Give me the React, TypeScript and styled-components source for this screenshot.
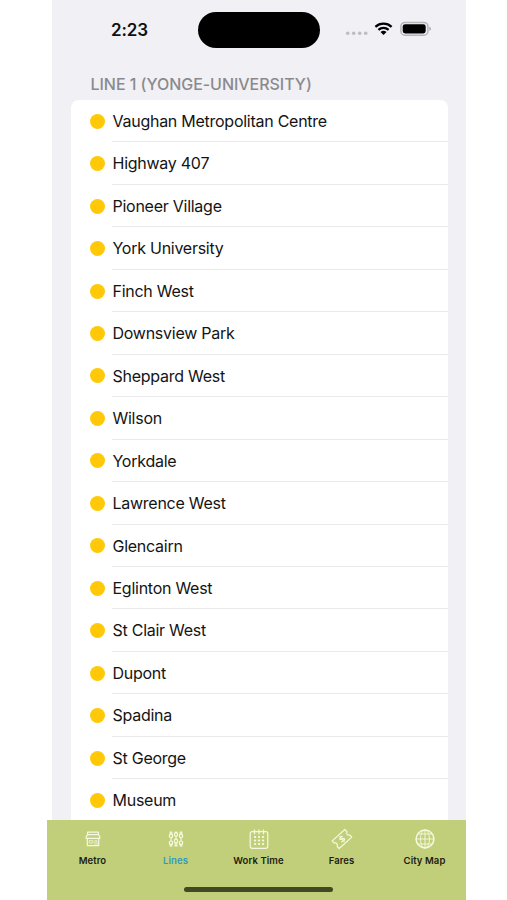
import React from "react";
import styled, { createGlobalStyle } from "styled-components";

const GlobalStyle = createGlobalStyle`
  * { box-sizing: border-box; }
  body { margin: 0; background: #fff; font-family: Inter, "Liberation Sans", sans-serif; overflow: hidden; }
`;

const Phone = styled.div`
  width: 419px;
  height: 900px;
  margin-left: 47px;
  display: flex;
  flex-direction: column;
`;

const Screen = styled.main`
  height: 820px;
  margin-left: 5px;
  background: #f1f0f5;
  overflow: hidden;
  flex: none;
`;

const StatusBar = styled.header`
  height: 70px;
  display: grid;
  grid-template-columns: 146px 122px 1fr;
  padding-top: 11.5px;
  align-items: start;
`;

const Clock = styled.time`
  padding: 8px 0 0 59px;
  font-size: 17px;
  line-height: 21px;
  font-weight: 600;
  letter-spacing: -0.1px;
  color: #111;
`;

const Island = styled.div`
  height: 36px;
  border-radius: 18px;
  background: #000;
`;

const StatusIcons = styled.svg`
  display: block;
  margin: 7.5px 0 0 21.5px;
`;

const SectionTitle = styled.h2`
  margin: 0;
  height: 30px;
  padding: 4px 0 0 38.5px;
  font-size: 16px;
  line-height: 20px;
  font-weight: 550;
  letter-spacing: -0.04px;
  color: #8a8a8e;
`;

const Card = styled.ul`
  list-style: none;
  margin: 0 18.5px 0 19px;
  padding: 0 0 0 19px;
  background: #fff;
  border-radius: 8px 8px 0 0;
`;

const Station = styled.li`
  height: 42.46px;
  display: flex;
  align-items: center;
  gap: 7px;
`;

const Dot = styled.span`
  width: 15px;
  height: 15px;
  border-radius: 50%;
  background: #ffc90a;
  flex: none;
`;

const StationName = styled.span`
  flex: 1;
  align-self: stretch;
  padding-left: 0.5px;
  font-size: 16px;
  line-height: 43.4px;
  letter-spacing: -0.26px;
  color: #141414;
  border-bottom: 1px solid #e9e9eb;
`;

const TabBar = styled.nav`
  height: 80px;
  background: #c1cf7a;
  display: flex;
  flex-direction: column;
  align-items: center;
  flex: none;
`;

const Tabs = styled.div`
  width: 415px;
  height: 67px;
  margin-left: 4px;
  padding-top: 8px;
  display: grid;
  grid-template-columns: repeat(5, 1fr);
`;

const Tab = styled.a<{ $active?: boolean }>`
  display: flex;
  flex-direction: column;
  align-items: center;
  gap: 3.5px;
  font-size: 9.5px;
  line-height: 14px;
  font-weight: 600;
  letter-spacing: 0.08px;
  white-space: nowrap;
  color: ${(p) => (p.$active ? "#3698c0" : "#1d2110")};
`;

const Glyph = styled.svg`
  width: 22px;
  height: 22px;
  fill: none;
  stroke: #f5f9df;
  stroke-width: 1.2;
  stroke-linecap: round;
  stroke-linejoin: round;
`;

const HomeIndicator = styled.div`
  width: 149px;
  height: 5px;
  margin-left: 4px;
  border-radius: 3px;
  background: #424824;
`;

const stations = [
  "Vaughan Metropolitan Centre", "Highway 407", "Pioneer Village", "York University",
  "Finch West", "Downsview Park", "Sheppard West", "Wilson", "Yorkdale",
  "Lawrence West", "Glencairn", "Eglinton West", "St Clair West", "Dupont",
  "Spadina", "St George", "Museum",
];

const ShopIcon = () => (
  <Glyph viewBox="0 0 22 22">
    <path d="M5.6 4.2h10.8v2.4H5.6zM5.6 6.6 4.2 8.4v1.9h13.6V8.4l-1.4-1.8M5.3 10.3v7.3h11.4v-7.3" />
    <path strokeWidth=".8" d="M7.6 12.7h3.4v2.4H7.6zM13 17.3v-4.6h1.9v4.6" />
  </Glyph>
);

const LinesIcon = () => (
  <Glyph viewBox="0 0 22 22">
    {[[6, 8, 14.7], [11, 6.5, 12.8], [16, 8, 14.7]].map(([x, upper, lower]) => (
      <g key={x}>
        <circle cx={x} cy={upper} r="1.7" />
        <circle cx={x} cy={lower} r="1.7" />
        <path d={`M${x - 0.8} ${upper - 1.7}V4h1.6V${upper - 1.7}M${x} ${upper + 2}V${lower - 2}M${x - 0.8} ${lower + 1.7}V18h1.6V${lower + 1.7}`} />
      </g>
    ))}
  </Glyph>
);

const CalendarIcon = () => (
  <Glyph viewBox="0 0 22 22">
    <rect x="2.2" y="3.7" width="17.6" height="16.6" rx="2" />
    <path d="M6.5 1.8v4M11 1.8v4M15.5 1.8v4" />
    {[9, 12.5, 16].map((y) => (
      <path key={y} strokeWidth="1.8" d={`M6.8 ${y}h.5M10.8 ${y}h.5M14.8 ${y}h.5`} />
    ))}
  </Glyph>
);

const TicketIcon = () => (
  <Glyph viewBox="0 0 22 22">
    <g transform="rotate(-42 11 11)">
      <path d="M2.5 5.8h17v3.1a2.2 2.2 0 0 0 0 4.2v3.1h-17v-3.1a2.2 2.2 0 0 0 0-4.2z" />
      <path d="M13 9.2c-1.2-1-3.7-.7-3.7.6 0 1.6 3.7.8 3.7 2.4 0 1.3-2.6 1.6-4 .5M11.1 7.8v6.4" />
    </g>
  </Glyph>
);

const GlobeIcon = () => (
  <Glyph viewBox="0 0 22 22">
    <circle cx="11" cy="11" r="8.9" strokeWidth="1.5" />
    <ellipse cx="11" cy="11" rx="4.5" ry="9" strokeWidth=".9" />
    <path strokeWidth=".9" d="M11 2v18M2 11h18M3.8 6h14.4M3.8 16h14.4" />
  </Glyph>
);

const tabs = [
  { label: "Metro", Icon: ShopIcon },
  { label: "Lines", Icon: LinesIcon, active: true },
  { label: "Work Time", Icon: CalendarIcon },
  { label: "Fares", Icon: TicketIcon },
  { label: "City Map", Icon: GlobeIcon },
];

export default function App() {
  return (
    <>
      <GlobalStyle />
      <Phone>
        <Screen>
          <StatusBar>
            <Clock>2:23</Clock>
            <Island />
            <StatusIcons width="90" height="22" viewBox="0 0 90 22">
              <g fill="#bdbcc2">
                <circle cx="5.7" cy="14.3" r="1.8" />
                <circle cx="11.7" cy="14.3" r="1.8" />
                <circle cx="17.7" cy="14.3" r="1.8" />
                <circle cx="23.7" cy="14.3" r="1.8" />
              </g>
              <g fill="none" stroke="#000" strokeWidth="2.3">
                <path d="M33.4 7.8a12 12 0 0 1 16.2 0" />
                <path d="M36.4 10.9a7.7 7.7 0 0 1 10.2 0" />
              </g>
              <path d="M38.5 13.1a4.6 4.6 0 0 1 6 0l-3 3z" />
              <rect x="58.9" y="3.4" width="27" height="12.8" rx="4" fill="#f1f0f5" stroke="#b5b4b9" strokeWidth="1.5" />
              <rect x="60.7" y="5.2" width="23" height="9.2" rx="2.4" />
              <path d="M87.3 7.8c2.2.7 2.2 3.3 0 4z" fill="#aaa9ae" />
            </StatusIcons>
          </StatusBar>
          <SectionTitle>LINE 1 (YONGE-UNIVERSITY)</SectionTitle>
          <Card>
            {stations.map((name) => (
              <Station key={name}>
                <Dot />
                <StationName>{name}</StationName>
              </Station>
            ))}
          </Card>
        </Screen>
        <TabBar>
          <Tabs>
            {tabs.map(({ label, Icon, active }) => (
              <Tab key={label} $active={active}>
                <Icon />
                {label}
              </Tab>
            ))}
          </Tabs>
          <HomeIndicator />
        </TabBar>
      </Phone>
    </>
  );
}
